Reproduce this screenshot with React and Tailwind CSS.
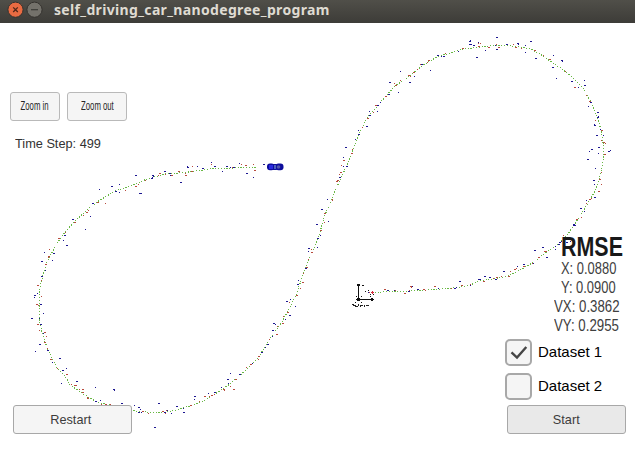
import React from 'react';

const sans = 'font-["Liberation_Sans",Arial,sans-serif]';

// Estimated path of the tracked car.
const track =
  'M372 293 L385 291.5 L400 291.5 L420 290.5 L440 289 L458 287.5 L470 285 L480 281 L498 278 L508 276 L520 270 L533 262.5 L545 253 L556 246 L568 234 L578 219 L583 211 L590 200 L595 191 L599 180 L602 168 L603.5 157 L603 143 L601 130 L597 116 L591 102 L583 88 L571 76 L562 69 L550 61 L540 54 L530 48.5 L519 47 L508 45.5 L495 45.5 L483 46.5 L473 48 L463 49 L450 53 L437 57 L425 64 L417 70 L405 79.5 L395 86 L385 97 L375 109 L368 116 L361 130 L355 145 L347 165 L341 178 L336 189 L332 198 L325 215 L320 232 L315 246 L309 259 L303 275 L296 295 L290 307 L282 322 L271 337 L258 358 L245 371 L230 384 L218 392 L207 399 L196 404 L180 409 L165 412.5 L151 412.5 L135 411 L110 405 L97 402 L88 397 L70 385 L65 376 L57 368 L48 350 L43 336 L40 323 L39 312 L40 287 L43 275 L47 262 L56 245 L65 232 L76 220 L86 211 L97 202 L115 191 L130 186 L147 179 L165 174 L185 172.5 L210 169 L220 168 L235 168 L257 167';

// Sensor readings by region: origin in pixels, points in thirds of a pixel.
const readings = [
  {
    x: 130, y: 150,
    blue: '18,76 32,129 69,78 67,86 106,65 121,69 121,75 155,97 172,50 174,52 201,49 220,54 245,38 257,50 277,64 292,49 302,52 314,52 329,40 352,70 370,82 403,44',
    red: '84,76 92,70 106,73 126,76 165,69 168,75 187,48 187,65 245,42 311,52 334,43 348,46 370,44 377,60 25,103',
  },
  {
    x: 340, y: 270,
    blue: '85,66 145,61 163,61 209,64 216,50 235,58 294,55 346,54 349,52 361,34 390,46 418,28 421,28 436,19 448,23 469,29',
    red: '88,66 97,67 97,70 136,58 165,61 196,70 207,62 213,49 214,53 253,59 256,61 286,49 334,55 366,46 390,43 433,34',
  },
  {
    x: 490, y: 225,
    blue: '2,157 44,139 82,125 103,119 130,115 135,76 159,67 172,97 196,64 208,58 214,48 232,51 242,48 252,1 196,74 211,53',
    red: '11,160 23,158 35,154 58,153 61,140 77,132 79,130 103,123 127,115 148,97 163,80 169,79 208,52 227,40 220,31',
  },
  {
    x: 0, y: 380,
    blue: '184,10 232,4 286,22 343,29 344,31 367,70 302,61 290,64 404,76 418,82 421,88 418,98 423,96 478,71 502,92 495,98 515,100 532,79 550,86 553,98 583,58 586,50 626,40 646,37 685,11 466,142',
    red: '214,13 226,16 250,28 249,38 262,53 265,56 305,73 320,73 332,73 430,94 445,100 490,94 496,99 502,90 532,80 574,77 598,64 616,49 628,49 638,46 644,44 674,28 691,19 703,28',
  },
  {
    x: 20, y: 150,
    blue: '238,118 277,109 298,104 348,76 363,130 288,124 299,127 399,76 397,82 436,64 451,69 221,160 210,199 161,208 196,238 136,256 130,271 142,286 73,307 103,310 96,331 68,334 77,361 67,380 51,430 46,436 44,442 63,463 69,490 37,504 57,505 64,523 70,550 60,582 47,603 85,600 97,637 120,624 139,655 130,661 124,700 172,694 226,712 283,718',
    red: '257,160 235,157 205,180 202,187 190,196 165,216 136,247 118,265 89,298 87,319 86,323 79,343 65,391 54,405 63,439 53,464 55,465 56,522 58,541 76,547 80,559 75,576 83,595 95,627 111,656 142,673 154,703 169,706 178,718 190,718 315,121 349,109 376,91 421,70 453,75 477,65',
  },
  {
    x: 220, y: 180,
    blue: '322,58 307,88 325,124 291,133 301,166 295,175 291,202 268,205 264,214 259,265 235,301 236,313 211,358 201,364 225,379 211,407 196,418 164,431 165,433 160,450 158,469 145,493 136,503 127,517 97,551 62,584 32,581 24,599 5,622',
    red: '337,60 316,99 313,128 304,151 274,208 277,217 266,238 261,262 250,280 250,307 241,325 232,346 208,367 206,397 190,408 190,429 172,439 172,463 147,478 118,530 116,537 95,552 79,562 49,598 13,630 356,2',
  },
  {
    x: 320, y: 30,
    blue: '22,508 61,442 70,409 82,409 70,382 79,352 106,328 118,312 115,301 142,290 148,244 151,257 172,243 175,226 181,217 208,194 234,187 211,157 240,124 271,158 283,139 307,102 331,120 356,76 364,78 373,78 415,63 451,33 454,43 463,46 475,37 471,82',
    red: '37,508 52,454 59,433 63,427 64,406 73,392 97,358 97,369 127,292 145,265 160,247 170,226 196,198 199,200 223,160 229,166 241,151 268,137 271,138 283,127 292,119 304,104 322,98 328,90 375,70 430,54 476,48',
  },
  {
    x: 470, y: 30,
    blue: '1,32 2,43 21,82 81,22 46,61 81,58 75,45 144,41 145,43 112,43 165,46 184,35 166,67 199,85 250,76 250,112 276,93 277,92 258,145 307,154 343,151 346,166 325,173 364,217 355,229 386,248 385,258 385,262 374,284 376,286 391,298 381,316 400,317 388,353 386,370 366,358 358,363 355,388 421,361 418,364 375,415 373,451 373,462 375,502 350,510 334,535 344,544 313,584 315,586 220,652',
    red: '26,41 28,48 31,40 58,52 78,44 87,51 130,43 139,52 154,55 196,61 220,76 241,88 285,124 316,172 350,196 361,214 376,271 397,301 394,331 403,338 406,340 406,373 394,426 391,447 394,463 387,484 363,505 361,507 349,520 323,567 334,562',
  },
];

const toPath = (x, y, list) =>
  list
    .split(' ')
    .map((pair, i) => {
      const [px, py] = pair.split(',').map(Number);
      const w = i % 2 ? 2 : 1;
      return `M${x + Math.floor(px / 3) + 1 - w} ${y + Math.floor(py / 3)}h${w}v1h-${w}z`;
    })
    .join('');

function Plot() {
  return (
    <svg className="absolute left-0 top-0" width="635" height="473" viewBox="0 0 635 473" shapeRendering="crispEdges">
      <path d={track} fill="none" stroke="#69b845" strokeWidth="1" strokeDasharray="1.2 1.6" />
      {readings.map((r, i) => (
        <g key={i}>
          <path d={toPath(r.x, r.y, r.red)} fill="#b84a3c" />
          <path d={toPath(r.x, r.y, r.blue)} fill="#1c1690" />
        </g>
      ))}
      <g shapeRendering="auto">
        <rect x="267" y="163.500" width="7.500" height="6.800" rx="3" fill="#0d0d9c" />
        <rect x="271" y="164" width="7" height="6" rx="2" fill="#0d0d9c" />
        <rect x="275.500" y="163.500" width="8" height="6.800" rx="3" fill="#0d0d9c" />
        <rect x="269" y="165" width="4" height="4" fill="#2929e0" />
        <rect x="274" y="165" width="2" height="4" fill="#4d61bd" />
        <circle cx="278.500" cy="167" r="1.800" fill="#5356ad" />
      </g>
      <path d="M358.500 285V300M358 299.500H372" stroke="#111" fill="none" />
      <path d="M357 284h3v2h-3zM362 285h2v1h-2zM371 298h2v3h-2zM373 299h1v1h-1zM357 298h3v3h-3zM356 299h5v1h-5zM356 296h1v1h-1zM361 296h1v1h-1zM355 302h1v1h-1zM361 302h1v1h-1zM365 291h1v1h-1zM368 290h1v1h-1zM370 294h1v1h-1zM373 294h1v1h-1zM370 296h1v1h-1z" fill="#111" />
      <path d="M352 304h2v1h-2zM353 305h2v1h-2zM355 305h1v2h-1zM356 306h2v1h-2zM358 304h1v2h-1zM360 305h1v2h-1zM361 305h2v1h-2zM364 305h1v2h-1zM366 305h2v1h-2zM368 305h1v1h-1z" fill="#222" />
      <path d="M371 292h3v1h-3zM372 291h1v3h-1z" fill="#d52c3c" />
    </svg>
  );
}

function Button({ className, children }) {
  return (
    <button className={`relative flex h-[29px] items-center justify-center rounded-[3px] border text-[#3c3c3c] ${className}`}>
      {children}
    </button>
  );
}

function Toggle({ checked, label }) {
  return (
    <label className="flex h-7 items-center">
      <span className="flex h-[27px] w-[27px] shrink-0 items-center justify-center rounded-[5px] border-2 border-[#a8a8a8] bg-[#f5f5f5]">
        {checked && (
          <svg width="18" height="15" viewBox="0 0 18 15" fill="none" stroke="#464646" strokeWidth="2.400">
            <path d="M1.500 7.300 7 12.500 16.300 2" />
          </svg>
        )}
      </span>
      <span className="ml-[6px] whitespace-nowrap text-[15px] text-black">{label}</span>
    </label>
  );
}

function Reading({ className, children }) {
  return (
    <div className={`flex h-[19px] origin-left items-center whitespace-nowrap text-[17px] leading-none text-[#404040] ${className}`}>
      {children}
    </div>
  );
}

export default function App() {
  return (
    <div className={`relative flex h-[473px] w-[635px] flex-col overflow-hidden bg-white ${sans}`}>
      <header className="flex h-[23px] shrink-0 items-center bg-linear-to-b from-[#504f49] to-[#3d3c38] pb-[3px] pl-[7px]">
        <svg width="36" height="18" viewBox="0 0 36 18" fill="none">
          <circle cx="8.500" cy="8.700" r="7.600" fill="#e96b42" stroke="#34322e" />
          <path d="M6.200 6.400l4.600 4.600M10.800 6.400l-4.600 4.600" stroke="#502719" strokeWidth="1.300" />
          <circle cx="27.500" cy="8.700" r="7.600" fill="#74726b" stroke="#34322e" />
          <path d="M24 8.700h7" stroke="#3c3b37" strokeWidth="1.200" />
        </svg>
        <h1 className='ml-[11px] whitespace-nowrap font-["Noto_Sans",sans-serif] text-[14px] font-bold leading-5 tracking-[0.340px] text-[#dfdbd2]'>
          self_driving_car_nanodegree_program
        </h1>
      </header>

      <Plot />

      <main className="relative flex flex-1 justify-between">
        <section className="flex flex-col items-start pl-[10px] pt-[69px]">
          <div className="flex gap-[7px]">
            <Button className="w-[50px] border-[#b9b9b9] bg-[#f5f5f5] text-[12.500px]">
              <span className="scale-x-[0.620] whitespace-nowrap text-[#262626]">Zoom in</span>
            </Button>
            <Button className="w-[60px] border-[#b9b9b9] bg-[#f5f5f5] text-[12.500px]">
              <span className="scale-x-[0.620] whitespace-nowrap text-[#262626]">Zoom out</span>
            </Button>
          </div>
          <p className="ml-[5px] mt-[13px] origin-left scale-x-[0.980] whitespace-nowrap text-[13px] leading-5 text-[#323232]">Time Step: 499</p>
          <Button className="ml-[3px] mt-[251px] w-[119px] border-[#a8a8a8] bg-[#f5f5f5] pr-[8px] pt-[2px]">
            <span className="ml-[5px] scale-x-[0.940] text-[13.500px]">Restart</span>
          </Button>
        </section>

        <section className="flex w-[130px] flex-col pt-[212px]">
          <h2 className="ml-[56px] flex h-[24px] origin-left scale-x-[0.780] items-center whitespace-nowrap text-[27.500px] font-bold leading-[22px] text-[#191919]">RMSE</h2>
          <Reading className="ml-[56px] scale-x-[0.760]">X: 0.0880</Reading>
          <Reading className="ml-[56px] scale-x-[0.760]">Y: 0.0900</Reading>
          <Reading className="ml-[49px] scale-x-[0.780]">VX: 0.3862</Reading>
          <Reading className="ml-[49px] scale-x-[0.780]">VY: 0.2955</Reading>
          <div className="mt-[3px] flex flex-col gap-[6px]">
            <Toggle checked label="Dataset 1" />
            <Toggle label="Dataset 2" />
          </div>
          <Button className="ml-[2px] mt-[5px] w-[119px] border-[#a8a8a8] bg-[#e9e9e9] pt-[2px]">
            <span className="scale-x-[0.940] text-[13.500px]">Start</span>
          </Button>
        </section>
      </main>
    </div>
  );
}
